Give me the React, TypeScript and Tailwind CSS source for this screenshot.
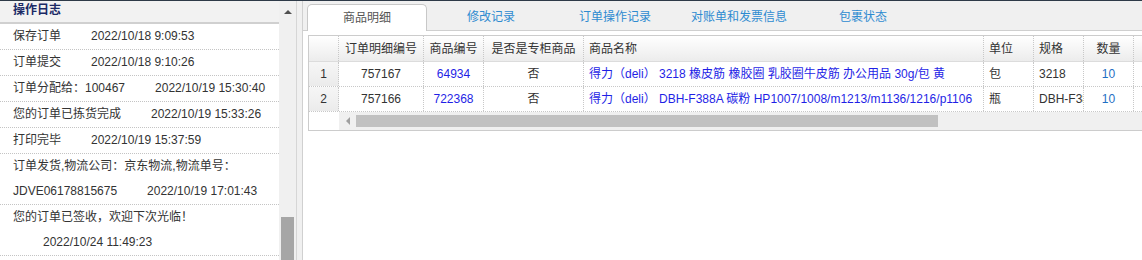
import React from 'react';

const font = { fontFamily: '"Liberation Sans", "Noto Sans CJK SC", sans-serif' };

type LogItem = { text: string; time: string; wrap?: boolean };

const logs: LogItem[] = [
	{ text: '保存订单', time: '2022/10/18 9:09:53' },
	{ text: '订单提交', time: '2022/10/18 9:10:26' },
	{ text: '订单分配给：100467', time: '2022/10/19 15:30:40' },
	{ text: '您的订单已拣货完成', time: '2022/10/19 15:33:26' },
	{ text: '打印完毕', time: '2022/10/19 15:37:59' },
	{ text: '订单发货,物流公司：京东物流,物流单号：JDVE06178815675', time: '2022/10/19 17:01:43', wrap: true },
	{ text: '您的订单已签收，欢迎下次光临！', time: '2022/10/24 11:49:23', wrap: true },
];

const tabs = ['商品明细', '修改记录', '订单操作记录', '对账单和发票信息', '包裹状态'];

const rows = [
	{ id: '757167', code: '64934', counter: '否', name: '得力（deli） 3218 橡皮筋 橡胶圈 乳胶圈牛皮筋 办公用品 30g/包 黄', unit: '包', spec: '3218', qty: '10' },
	{ id: '757166', code: '722368', counter: '否', name: '得力（deli） DBH-F388A 碳粉 HP1007/1008/m1213/m1136/1216/p1106', unit: '瓶', spec: 'DBH-F388A', qty: '10' },
];

function LogRow({ item }: { item: LogItem }) {
	if (item.text.startsWith('订单发货')) {
		return (
			<div className="border-b border-dotted border-[#c4c4c4] pl-[13px] leading-[25px] text-[#333]">
				<div>订单发货,物流公司：京东物流,物流单号：</div>
				<div>
					JDVE06178815675<span className="ml-[30px]">{item.time}</span>
				</div>
			</div>
		);
	}
	if (item.wrap) {
		return (
			<div className="border-b border-dotted border-[#c4c4c4] pl-[13px] leading-[25px] text-[#333]">
				<div>{item.text}</div>
				<div className="pl-[30px]">{item.time}</div>
			</div>
		);
	}
	return (
		<div className="border-b border-dotted border-[#c4c4c4] pl-[13px] leading-[25px] text-[#333] whitespace-nowrap">
			{item.text}
			<span className="ml-[30px]">{item.time}</span>
		</div>
	);
}

function App() {
	return (
		<div className="w-[1142px] h-[260px] overflow-hidden bg-white text-[12px] flex flex-col" style={font}>
			<div className="h-[1px] bg-[#2e3a48] shrink-0"></div>
			<div className="flex flex-1 min-h-0">
				{/* left: operation log */}
				<div className="w-[297px] flex border-r border-[#d6d6d6] shrink-0">
					<div className="w-[279px] overflow-hidden">
						<div className="h-[23px] bg-[#f2f2f2] border-b-2 border-[#d0d0d0] pl-[13px] leading-[18px] font-bold text-[#1b2a66]">
							操作日志
						</div>
						{logs.map((l, i) => (
							<LogRow key={i} item={l} />
						))}
					</div>
					<div className="w-[17px] bg-[#f0f0f0] flex flex-col items-center">
						<div className="h-[21px] flex items-center justify-center">
							<div className="w-0 h-0 border-l-[4px] border-r-[4px] border-b-[4px] border-l-transparent border-r-transparent border-b-[#505050]"></div>
						</div>
						<div className="flex-1"></div>
						<div className="w-[13px] h-[43px] bg-[#a6a6a6]"></div>
					</div>
				</div>
				<div className="w-[5px] bg-[#f0f0f0] shrink-0"></div>
				{/* right: tabs + grid */}
				<div className="flex-1 min-w-0 border-l border-[#d0d0d0] flex flex-col">
					<div className="h-[30px] bg-[#f0f0f0] border-b border-[#cfcfcf] flex items-end pl-[4px] gap-[4px] shrink-0">
						{tabs.map((t, i) =>
							i === 0 ? (
								<div
									key={t}
									className="w-[120px] h-[27px] -mb-[1px] bg-white border border-b-0 border-[#c8c8c8] rounded-t-[5px] flex items-center justify-center text-[#555]"
								>
									{t}
								</div>
							) : (
								<div key={t} className="w-[120px] h-[27px] flex items-center justify-center text-[#2e8bd0]">
									{t}
								</div>
							)
						)}
					</div>
					<div className="pt-[4px] pl-[5px]">
						<div className="border border-r-0 border-[#cccccc] overflow-hidden">
							{/* header */}
							<div className="flex h-[26px] border-b border-[#dcdcdc] bg-linear-to-b from-white to-[#ececec] text-[#333] whitespace-nowrap">
								<div className="w-[30px] shrink-0 border-r border-dotted border-[#c8c8c8]"></div>
								<div className="w-[85px] shrink-0 border-r border-dotted border-[#c8c8c8] flex items-center justify-center">订单明细编号</div>
								<div className="w-[60px] shrink-0 border-r border-dotted border-[#c8c8c8] flex items-center justify-center">商品编号</div>
								<div className="w-[100px] shrink-0 border-r border-dotted border-[#c8c8c8] flex items-center justify-center">是否是专柜商品</div>
								<div className="w-[400px] shrink-0 border-r border-dotted border-[#c8c8c8] flex items-center pl-[5px]">商品名称</div>
								<div className="w-[50px] shrink-0 border-r border-dotted border-[#c8c8c8] flex items-center pl-[5px]">单位</div>
								<div className="w-[50px] shrink-0 border-r border-dotted border-[#c8c8c8] flex items-center pl-[5px]">规格</div>
								<div className="w-[50px] shrink-0 border-r border-dotted border-[#c8c8c8] flex items-center justify-center">数量</div>
								<div className="w-[100px] shrink-0"></div>
							</div>
							{rows.map((r, i) => (
								<div key={r.id} className="flex h-[25px] border-b border-dotted border-[#c8c8c8] whitespace-nowrap">
									<div className="w-[30px] shrink-0 border-r border-dotted border-[#c8c8c8] bg-linear-to-b from-[#f6f6f6] to-[#ebebeb] flex items-center justify-center text-[#333]">
										{i + 1}
									</div>
									<div className="w-[85px] shrink-0 border-r border-dotted border-[#c8c8c8] flex items-center justify-center text-[#333]">{r.id}</div>
									<div className="w-[60px] shrink-0 border-r border-dotted border-[#c8c8c8] flex items-center justify-center text-[#1f1fe6]">{r.code}</div>
									<div className="w-[100px] shrink-0 border-r border-dotted border-[#c8c8c8] flex items-center justify-center text-[#333]">{r.counter}</div>
									<div className="w-[400px] shrink-0 border-r border-dotted border-[#c8c8c8] flex items-center pl-[5px] text-[#1f1fe6] overflow-hidden">{r.name}</div>
									<div className="w-[50px] shrink-0 border-r border-dotted border-[#c8c8c8] flex items-center pl-[5px] text-[#333]">{r.unit}</div>
									<div className="w-[50px] shrink-0 border-r border-dotted border-[#c8c8c8] flex items-center pl-[5px] text-[#333] overflow-hidden">{r.spec}</div>
									<div className="w-[50px] shrink-0 border-r border-dotted border-[#c8c8c8] flex items-center justify-center text-[#1f6fc4]">{r.qty}</div>
									<div className="w-[100px] shrink-0"></div>
								</div>
							))}
							{/* horizontal scrollbar */}
							<div className="flex h-[18px]">
								<div className="w-[30px] shrink-0 bg-white"></div>
								<div className="flex-1 bg-[#f0f0f0] flex items-center">
									<div className="w-[17px] flex items-center justify-center">
										<div className="w-0 h-0 border-t-[4px] border-b-[4px] border-r-[4px] border-t-transparent border-b-transparent border-r-[#a0a0a0]"></div>
									</div>
									<div className="w-[582px] h-[12px] bg-[#c1c1c1]"></div>
								</div>
							</div>
						</div>
					</div>
				</div>
			</div>
		</div>
	);
}

export default App;
